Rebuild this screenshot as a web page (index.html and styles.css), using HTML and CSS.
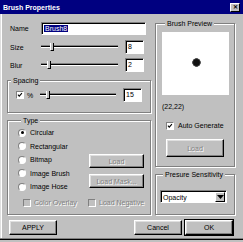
FILE: index.html
```html
<!DOCTYPE html>
<html lang="en">
<head>
    <meta charset="UTF-8">
    <title>Brush Properties</title>
    <link rel="stylesheet" href="styles.css">
</head>
<body>
    <div class="window">
        <div class="titlebar">
            <span class="title">Brush Properties</span>
            <span class="close">&#x2715;</span>
        </div>

        <div class="content">
            <div class="col-left">
                <div class="row row-name">
                    <span class="row-label">Name</span>
                    <span class="field name-field"><span class="sel">Brush8</span></span>
                </div>
                <div class="row row-size">
                    <span class="row-label">Size</span>
                    <span class="slider"><span class="track"></span><span class="thumb" style="left: 9px"></span></span>
                    <span class="field num-field">8</span>
                </div>
                <div class="row row-blur">
                    <span class="row-label">Blur</span>
                    <span class="slider"><span class="track"></span><span class="thumb" style="left: 6px"></span></span>
                    <span class="field num-field">2</span>
                </div>

                <div class="group spacing">
                    <div class="group-title">Spacing</div>
                    <div class="spacing-row">
                        <span class="check checked">
                            <svg viewBox="0 0 8 8" width="8" height="8"><path d="M1.2 3.6 L3 5.6 L6.6 1.6" fill="none" stroke="#000" stroke-width="1.4"/></svg>
                        </span>
                        <span class="pct">%</span>
                        <span class="slider"><span class="track"></span><span class="thumb" style="left: 6px"></span></span>
                        <span class="field num-field">15</span>
                    </div>
                </div>

                <div class="group type">
                    <div class="group-title">Type</div>
                    <div class="type-grid">
                        <div class="radios">
                            <div class="radio-row"><span class="radio on"></span>Circular</div>
                            <div class="radio-row"><span class="radio"></span>Rectangular</div>
                            <div class="radio-row"><span class="radio"></span>Bitmap</div>
                            <div class="radio-row"><span class="radio"></span>Image Brush</div>
                            <div class="radio-row"><span class="radio"></span>Image Hose</div>
                        </div>
                        <div class="type-buttons">
                            <span class="btn disabled btn-load">Load</span>
                            <span class="btn disabled btn-mask">Load Mask...</span>
                        </div>
                    </div>
                    <div class="type-checks">
                        <span class="check-item overlay"><span class="check off"></span><span class="dim">Color Overlay</span></span>
                        <span class="check-item"><span class="check off"></span><span class="dim">Load Negative</span></span>
                    </div>
                </div>
            </div>

            <div class="col-right">
                <div class="group preview">
                    <div class="group-title">Brush Preview</div>
                    <div class="preview-box"><span class="dot"></span></div>
                    <div class="coords">(22,22)</div>
                    <div class="auto-row">
                        <span class="check checked">
                            <svg viewBox="0 0 8 8" width="8" height="8"><path d="M1.2 3.6 L3 5.6 L6.6 1.6" fill="none" stroke="#000" stroke-width="1.4"/></svg>
                        </span>
                        Auto Generate
                    </div>
                    <span class="btn disabled btn-preview-load">Load</span>
                </div>

                <div class="group pressure">
                    <div class="group-title">Presure Sensitivity</div>
                    <div class="select">
                        <span class="select-text">Opacity</span>
                        <span class="select-arrow">
                            <svg viewBox="0 0 7 4" width="7" height="4"><path d="M0 0 H7 L3.5 4 Z" fill="#000"/></svg>
                        </span>
                    </div>
                </div>
            </div>
        </div>

        <div class="footer">
            <span class="btn btn-apply">APPLY</span>
            <span class="btn btn-cancel">Cancel</span>
            <span class="btn btn-ok">OK</span>
        </div>
    </div>
</body>
</html>
```

FILE: styles.css
```css
* {
    box-sizing: border-box;
}
html, body {
    margin: 0;
    padding: 0;
    background: #c0c0c0;
}
body {
    font-family: "Liberation Sans", Arial, sans-serif;
    font-size: 7px;
    line-height: 9px;
    color: #000;
    white-space: nowrap;
}
.window {
    width: 243px;
    height: 240px;
    background: #c0c0c0;
    overflow: hidden;
    box-shadow: inset 0 -1px #000, inset 0 -2px #808080, inset 1px 0 #dfdfdf, inset 2px 0 #fff;
}

/* title bar */
.titlebar {
    height: 14px;
    background: #000080;
    color: #fff;
    font-weight: bold;
    display: flex;
    align-items: center;
    justify-content: space-between;
    padding: 0 3px;
}
.close {
    width: 10px;
    height: 9px;
    background: #c0c0c0;
    color: #000;
    font-size: 6px;
    line-height: 7px;
    text-align: center;
    border: 1px solid;
    border-color: #fff #000 #000 #fff;
}

/* layout */
.content {
    display: grid;
    grid-template-columns: 144px 80px;
    column-gap: 4px;
    padding: 4px 0 0 7px;
}
.col-left {
    padding-top: 4px;
}
.row {
    display: flex;
    align-items: center;
}
.row-label {
    width: 34px;
    padding-left: 3px;
}
.row-size {
    margin-top: 5px;
}
.row-blur {
    margin-top: 4px;
}

/* sunken fields */
.field {
    display: block;
    background: #fff;
    border: 1px solid;
    border-color: #808080 #fff #fff #808080;
    box-shadow: inset 1px 1px #000;
    padding: 1px 0 0 2px;
    line-height: 10px;
}
.name-field {
    width: 105px;
    height: 13px;
}
.sel {
    background: #000080;
    color: #fff;
    padding: 0 1px;
}
.num-field {
    width: 19px;
    height: 14px;
    margin-left: 7px;
}

/* sliders */
.slider {
    position: relative;
    display: block;
    width: 77px;
    height: 14px;
}
.track {
    display: block;
    margin-top: 5px;
    height: 3px;
    background: #000;
    border-top: 1px solid #808080;
    border-bottom: 1px solid #fff;
}
.thumb {
    position: absolute;
    top: 3px;
    width: 4px;
    height: 8px;
    background: #c0c0c0;
    border-left: 1px solid #fff;
    border-right: 1px solid #000;
    border-bottom: 1px solid #000;
}

/* group boxes */
.group {
    border: 1px solid #808080;
    box-shadow: inset 1px 1px #fff, 1px 1px #fff;
}
.group-title {
    width: fit-content;
    margin: -5px 0 0 3px;
    padding: 0 2px;
    background: #c0c0c0;
}
.spacing {
    margin-top: 8px;
    padding-bottom: 10px;
}
.spacing-row {
    display: flex;
    align-items: center;
    margin-top: 3px;
    padding-left: 8px;
}
.pct {
    width: 16px;
    padding-left: 3px;
}
.spacing .slider {
    width: 76px;
}

.type {
    margin-top: 7px;
    padding: 0 6px 5px 10px;
}
.type-grid {
    display: grid;
    grid-template-columns: 71px 55px;
    margin-top: 1px;
}
.radio-row {
    height: 13.5px;
    display: flex;
    align-items: center;
}
.radio {
    width: 8px;
    height: 8px;
    border-radius: 50%;
    background: #fff;
    border: 1px solid;
    border-color: #808080 #fff #fff #808080;
    margin-right: 4px;
    display: flex;
    align-items: center;
    justify-content: center;
}
.radio.on::after {
    content: "";
    width: 3px;
    height: 3px;
    border-radius: 50%;
    background: #000;
}
.type-buttons {
    display: flex;
    flex-direction: column;
    padding-top: 28px;
    gap: 6px;
}
.btn-load,
.btn-mask {
    height: 14px;
}
.type-checks {
    display: grid;
    grid-template-columns: 70px 56px;
    margin-top: 3px;
    height: 12px;
    align-items: center;
}
.check-item {
    display: flex;
    align-items: center;
}
.overlay {
    padding-left: 5px;
}

/* checkboxes */
.check {
    width: 8px;
    height: 8px;
    background: #fff;
    border: 1px solid;
    border-color: #808080 #fff #fff #808080;
    display: flex;
    align-items: center;
    justify-content: center;
    flex: none;
}
.check svg {
    width: 6px;
    height: 6px;
}
.check.off {
    background: #c0c0c0;
    margin-right: 3px;
}
.dim {
    color: #808080;
    text-shadow: 1px 1px #fff;
}

/* buttons */
.btn {
    display: flex;
    align-items: center;
    justify-content: center;
    background: #c0c0c0;
    border: 1px solid;
    border-color: #fff #000 #000 #fff;
    box-shadow: inset -1px -1px #808080, inset 1px 1px #dfdfdf;
}
.btn.disabled {
    color: #808080;
    text-shadow: 1px 1px #fff;
}

/* right column */
.preview {
    margin-top: 5px;
    padding: 0 6px 9px 6px;
}
.preview-box {
    margin-top: 4px;
    width: 67px;
    height: 63px;
    background: #fff;
    display: flex;
    align-items: center;
    justify-content: center;
}
.dot {
    width: 9px;
    height: 9px;
    margin: -3px 0 0 1px;
    border-radius: 50%;
    background: radial-gradient(circle, #111 45%, #555 65%, rgba(255, 255, 255, 0) 72%);
}
.coords {
    margin-top: 7px;
}
.auto-row {
    display: flex;
    align-items: center;
    gap: 4px;
    margin-top: 10px;
    padding-left: 4px;
}
.btn-preview-load {
    width: 58px;
    height: 18px;
    margin: 9px 0 0 4px;
}

.pressure {
    margin-top: 7px;
    padding: 0 4px 11px 4px;
}
.select {
    margin-top: 11px;
    width: 67px;
    height: 13px;
    background: #fff;
    border: 1px solid;
    border-color: #808080 #fff #fff #808080;
    box-shadow: inset 1px 1px #000;
    display: flex;
    align-items: center;
    justify-content: space-between;
    padding: 1px 1px 0 2px;
}
.select-arrow {
    width: 10px;
    height: 10px;
    background: #c0c0c0;
    border: 1px solid;
    border-color: #fff #000 #000 #fff;
    display: flex;
    align-items: center;
    justify-content: center;
}

/* footer */
.footer {
    display: flex;
    gap: 3px;
    margin-top: 5px;
    padding: 0 10px 0 9px;
}
.footer .btn {
    width: 48px;
    height: 15px;
}
.btn-apply {
    margin-right: auto;
}
.btn-ok {
    outline: 1px solid #000;
}
```
